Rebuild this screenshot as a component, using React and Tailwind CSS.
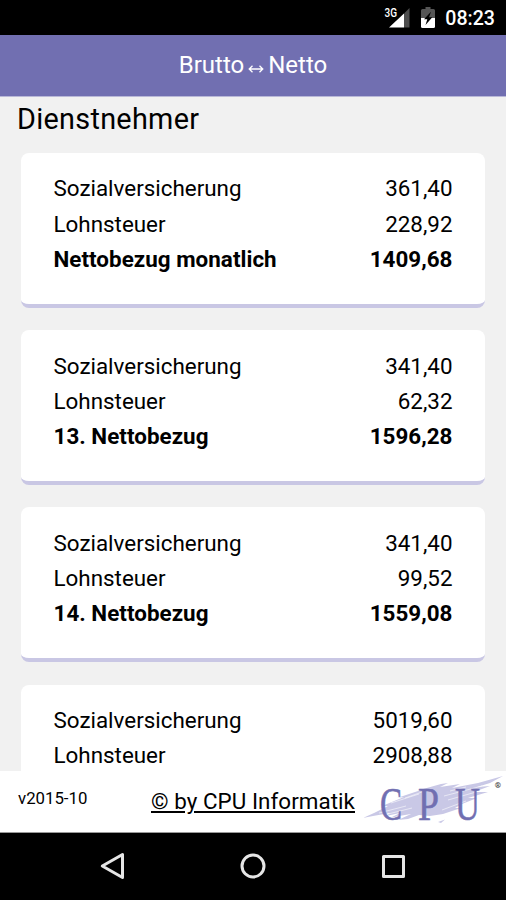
import React from "react";

const cards = [
  {
    rows: [
      ["Sozialversicherung", "361,40"],
      ["Lohnsteuer", "228,92"],
    ],
    total: ["Nettobezug monatlich", "1409,68"],
  },
  {
    rows: [
      ["Sozialversicherung", "341,40"],
      ["Lohnsteuer", "62,32"],
    ],
    total: ["13. Nettobezug", "1596,28"],
  },
  {
    rows: [
      ["Sozialversicherung", "341,40"],
      ["Lohnsteuer", "99,52"],
    ],
    total: ["14. Nettobezug", "1559,08"],
  },
  {
    rows: [
      ["Sozialversicherung", "5019,60"],
      ["Lohnsteuer", "2908,88"],
    ],
  },
];

const StatusBar = () => (
  <div className="flex h-[35px] shrink-0 items-center justify-end bg-black pr-[11px] text-white">
    <svg width="27" height="28" viewBox="0 -3 27 28" className="mt-px mr-[10px]">
      <path d="M20 6.5 V20.5 H5 Z" fill="#fff" />
      <path d="M20 6.5 L25.5 1 V20.5 H20 Z" fill="#4d4d4d" />
      <rect width="13.5" height="12" fill="#000" />
      <text x="0.5" y="10" fontSize="12" fontWeight="500" fill="#fff" textLength="12.5" lengthAdjust="spacingAndGlyphs">
        3G
      </text>
    </svg>
    <svg width="14" height="21" viewBox="0 0 14 21" className="mr-[10px]">
      <path d="M4.5 0 H9.5 V2 H12.5 Q14 2 14 3.5 V11 H0 V3.5 Q0 2 1.5 2 H4.5 Z" fill="#555" />
      <path d="M0 11 H14 V19.5 Q14 21 12.5 21 H1.5 Q0 21 0 19.5 Z" fill="#fff" />
      <path d="M10 4.8 L3 12.3 H6.3 L4.5 18 L11.3 10.3 H8 Z" fill="#000" />
    </svg>
    <span className="pt-[3px] text-[19.6px] leading-none font-medium">08:23</span>
  </div>
);

const Card = ({ rows, total }) => (
  <div className="h-[154.5px] shrink-0 rounded-[8px] border-b-4 border-[#c9c7e4] bg-white pt-[18.4px] pr-[32.5px] pl-[32.5px] text-[22.4px] leading-[35.2px]">
    {rows.map(([label, value]) => (
      <div key={label} className="flex justify-between">
        <span>{label}</span>
        <span>{value}</span>
      </div>
    ))}
    {total && (
      <div className="flex justify-between font-bold tracking-[0.03px]">
        <span>{total[0]}</span>
        <span>{total[1]}</span>
      </div>
    )}
  </div>
);

const Logo = () => (
  <svg width="142" height="57" viewBox="0 0 142 57" role="img" aria-label="CPU">
    <g fill="#c9c8e6">
      <path d="M-1 43 L10 38 L24 31 L18 31 L40 22 L33 23 L60 14 L52 16 L77 9 L84 8 L76 12 L96 9 L88 13 L114 8 L139 1 L126 8 L113 12 L126 11 L110 17 L124 17 L104 23 L113 23 L98 29 L91 33 L97 33 L79 39 L66 41 L55 40 L44 44 L34 45 L47 39 L35 41 L26 43 L36 38 L22 41 L26 38 L9 41 Z" />
      <path d="M74 47 L81 44.5 L77 48 Z" />
    </g>
    <g stroke="#fff" strokeWidth="0.8" opacity="0.7" fill="none">
      <path d="M27 28 L55 19 M41 23 L58 17 M80 21 L118 11 M84 25 L112 17 M15 38 L42 31 M24 39 L48 33 M78 35 L102 26 M86 16 L102 12" />
    </g>
    <g fill="#716fb1" stroke="#716fb1" strokeWidth="0.6" fontFamily="'Liberation Serif', serif" fontSize="46">
      <text transform="translate(16 44.5) scale(0.72 1)">C</text>
      <text transform="translate(54 44.5) scale(0.82 1)">P</text>
      <text transform="translate(91 44.5) scale(0.75 1)">U</text>
    </g>
    <text x="130.8" y="13" fontSize="8" fontWeight="700" fill="#333">
      ®
    </text>
  </svg>
);

const Footer = () => (
  <div className="flex h-[62px] shrink-0 border-b border-[#999] bg-white">
    <span className="w-[133px] pt-[15px] pl-[18px] text-[16.8px] leading-[24px]">v2015-10</span>
    <a href="#" className="w-[231px] pt-[15px] pl-[18px] text-[22.4px] leading-[30px] tracking-[0.05px] whitespace-nowrap underline">
      © by CPU Informatik
    </a>
    <div className="pt-[4px]">
      <Logo />
    </div>
  </div>
);

const NavBar = () => (
  <div className="h-[67px] shrink-0 bg-black">
    <svg width="506" height="67" viewBox="0 0 506 67" fill="none" stroke="#e6e6e6" strokeWidth="3" strokeLinejoin="round">
      <path d="M122.5 21.5 V44.5 L102.3 33 Z" />
      <circle cx="253" cy="33" r="11" />
      <rect x="383.5" y="23.5" width="20" height="20" />
    </svg>
  </div>
);

const App = () => {
  return (
    <div className="flex h-[900px] w-[506px] flex-col overflow-hidden bg-black font-['Roboto',sans-serif] text-black">
      <StatusBar />
      <div className="flex h-[62px] shrink-0 items-center justify-center border-b border-[#b9b8d8] bg-[#716fb1] pb-px text-[24px] text-white">
        <span>Brutto</span>
        <svg width="16" height="10" viewBox="0 0 16 10" fill="none" stroke="#fff" strokeWidth="1.3" className="mx-[4px] mt-[8px]">
          <path d="M1.5 5 H14.5 M4.5 1.7 L1.2 5 L4.5 8.3 M11.5 1.7 L14.8 5 L11.5 8.3" />
        </svg>
        <span>Netto</span>
      </div>
      <div className="flex flex-1 flex-col overflow-hidden bg-[#f1f1f1] px-[21px]">
        <h1 className="-ml-[4px] h-[56px] shrink-0 pt-[4px] text-[28.8px] leading-[36px] tracking-[0.3px]">Dienstnehmer</h1>
        <div className="flex flex-col gap-[22.7px]">
          {cards.map((card, i) => (
            <Card key={i} rows={card.rows} total={card.total} />
          ))}
        </div>
      </div>
      <Footer />
      <NavBar />
    </div>
  );
};

export default App;
